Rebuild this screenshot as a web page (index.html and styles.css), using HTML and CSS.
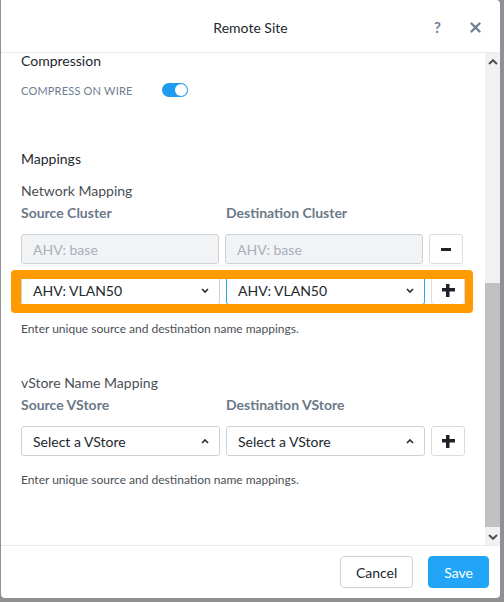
FILE: index.html
```html
<!DOCTYPE html>
<html>
<head>
<meta charset="utf-8">
<link rel="stylesheet" href="styles.css">
</head>
<body>
<div class="modal">
  <header class="modal-head">
    <div class="title">Remote Site</div>
    <div class="head-actions">
      <span class="help">?</span>
      <svg class="close" width="11" height="11" viewBox="0 0 11 11"><path d="M1.5 1.5 L9.5 9.5 M9.5 1.5 L1.5 9.5" stroke="#6f7f93" stroke-width="2.4" stroke-linecap="round"/></svg>
    </div>
  </header>
  <div class="modal-main">
    <div class="content">
      <div class="section-title">Compression</div>
      <div class="toggle-row">
        <span class="caps-label">COMPRESS ON WIRE</span>
        <span class="toggle"><span class="knob"></span></span>
      </div>

      <div class="section-title mappings">Mappings</div>
      <div class="sub-title first">Network Mapping</div>
      <div class="col-labels">
        <span>Source Cluster</span>
        <span>Destination Cluster</span>
      </div>
      <div class="map-row narrow">
        <div class="field disabled">AHV: base</div>
        <div class="field disabled">AHV: base</div>
        <div class="sq-btn"><span class="minus"></span></div>
      </div>
      <div class="map-row second">
        <div class="field select">AHV: VLAN50
          <svg class="chev" width="8" height="5" viewBox="0 0 8 5"><path d="M1 1 L4 4 L7 1" fill="none" stroke="#2a2f36" stroke-width="1.7"/></svg>
        </div>
        <div class="field select focused">AHV: VLAN50
          <svg class="chev" width="8" height="5" viewBox="0 0 8 5"><path d="M1 1 L4 4 L7 1" fill="none" stroke="#2a2f36" stroke-width="1.7"/></svg>
        </div>
        <div class="sq-btn"><span class="plus"></span></div>
        <div class="highlight"></div>
      </div>
      <div class="hint">Enter unique source and destination name mappings.</div>

      <div class="sub-title vstore">vStore Name Mapping</div>
      <div class="col-labels">
        <span>Source VStore</span>
        <span>Destination VStore</span>
      </div>
      <div class="map-row">
        <div class="field select">Select a VStore
          <svg class="chev" width="8" height="5" viewBox="0 0 8 5"><path d="M1 4 L4 1 L7 4" fill="none" stroke="#2a2f36" stroke-width="1.7"/></svg>
        </div>
        <div class="field select">Select a VStore
          <svg class="chev" width="8" height="5" viewBox="0 0 8 5"><path d="M1 4 L4 1 L7 4" fill="none" stroke="#2a2f36" stroke-width="1.7"/></svg>
        </div>
        <div class="sq-btn"><span class="plus"></span></div>
      </div>
      <div class="hint">Enter unique source and destination name mappings.</div>
    </div>
    <div class="scrollbar">
      <div class="sb-btn"><svg width="10" height="6" viewBox="0 0 10 6"><path d="M1 5 L5 1.2 L9 5" fill="none" stroke="#505050" stroke-width="2"/></svg></div>
      <div class="sb-track"><div class="sb-thumb"></div></div>
      <div class="sb-btn"><svg width="10" height="6" viewBox="0 0 10 6"><path d="M1 1 L5 4.8 L9 1" fill="none" stroke="#505050" stroke-width="2"/></svg></div>
    </div>
  </div>
  <footer class="modal-foot">
    <button class="btn">Cancel</button>
    <button class="btn primary">Save</button>
  </footer>
</div>
</body>
</html>
```
FILE: styles.css
```css
html, body {
  margin: 0;
  padding: 0;
}
body {
  background: #8e9094;
  font-family: Lato, "Open Sans", sans-serif;
  color: #22272e;
}
.modal {
  margin-left: 1px;
  width: 499px;
  height: 598px;
  background: #fff;
  border-radius: 0 4px 4px 4px;
  display: flex;
  flex-direction: column;
  overflow: hidden;
}
.modal-head {
  height: 52px;
  border-bottom: 1px solid #e7eaee;
  display: grid;
  grid-template-columns: 1fr auto 1fr;
  align-items: center;
  flex-shrink: 0;
}
.title {
  grid-column: 2;
  font-size: 14px;
  color: #22272e;
  padding-top: 2px;
}
.head-actions {
  grid-column: 3;
  justify-self: end;
  display: flex;
  align-items: center;
  gap: 29px;
  padding-right: 19px;
  padding-top: 2px;
}
.help {
  font-size: 15px;
  font-weight: 700;
  color: #6f7f93;
}
.modal-main {
  flex: 1;
  display: flex;
  min-height: 0;
}
.content {
  flex: 1;
  padding-left: 20px;
}
.section-title {
  font-size: 14px;
  line-height: 16px;
  color: #22272e;
}
.toggle-row {
  margin-top: 14px;
  height: 14px;
  display: flex;
  align-items: center;
}
.caps-label {
  font-size: 11px;
  color: #6e7d90;
  width: 141px;
  letter-spacing: 0.2px;
}
.toggle {
  width: 26px;
  height: 14px;
  border-radius: 7px;
  background: #1f9bf0;
  display: flex;
  justify-content: flex-end;
  align-items: center;
  padding-right: 1px;
  box-sizing: border-box;
}
.knob {
  width: 12px;
  height: 12px;
  border-radius: 50%;
  background: #fff;
}
.mappings {
  margin-top: 54px;
}
.sub-title {
  font-size: 14px;
  line-height: 16px;
  color: #4a4f56;
}
.sub-title.first {
  margin-top: 16px;
}
.sub-title.vstore {
  margin-top: 39px;
}
.col-labels {
  margin-top: 6px;
  display: grid;
  grid-template-columns: 205px auto;
  font-size: 14px;
  line-height: 16px;
  font-weight: 700;
  color: #6b7888;
}
.map-row {
  margin-top: 13px;
  display: grid;
  grid-template-columns: 199px 199px 34px;
  gap: 6px;
  height: 30px;
  position: relative;
}
.map-row.narrow {
  grid-template-columns: 198px 198px 34px;
}
.map-row.second {
  margin-top: 11px;
}
.field {
  box-sizing: border-box;
  height: 30px;
  border: 1px solid #ccd2d8;
  border-radius: 3px;
  font-size: 14px;
  display: flex;
  align-items: center;
  padding-left: 11px;
  padding-right: 10px;
  background: #fff;
  color: #22272e;
}
.field.disabled {
  background: #f2f3f5;
  color: #a7b0bb;
}
.field.select {
  justify-content: space-between;
}
.field.focused {
  border-color: #2aa5f5;
}
.chev {
  flex-shrink: 0;
}
.sq-btn {
  box-sizing: border-box;
  height: 30px;
  border: 1px solid #d8dde2;
  border-radius: 3px;
  background: #fff;
  display: flex;
  align-items: center;
  justify-content: center;
}
.minus {
  width: 10px;
  height: 3px;
  background: #1f2329;
}
.plus {
  width: 13px;
  height: 13px;
  background:
    linear-gradient(#1f2329, #1f2329) center / 13px 3.5px no-repeat,
    linear-gradient(#1f2329, #1f2329) center / 3.5px 13px no-repeat;
}
.highlight {
  position: absolute;
  left: -10px;
  top: -5px;
  width: 462px;
  height: 43px;
  box-sizing: border-box;
  border-style: solid;
  border-color: #ff9a00;
  border-width: 9px 8px 9px 10px;
  border-radius: 4px;
  pointer-events: none;
}
.hint {
  margin-top: 17px;
  font-size: 12px;
  line-height: 14px;
  color: #4a4f56;
}
.scrollbar {
  width: 15px;
  background: #f1f1f1;
  display: flex;
  flex-direction: column;
}
.sb-btn {
  height: 17px;
  display: flex;
  align-items: center;
  justify-content: center;
}
.sb-track {
  flex: 1;
  display: flex;
  flex-direction: column;
  justify-content: flex-end;
}
.sb-thumb {
  height: 244px;
  background: #c1c1c1;
  margin-bottom: 1px;
}
.modal-foot {
  height: 52px;
  border-top: 1px solid #e7eaee;
  display: flex;
  justify-content: flex-end;
  align-items: center;
  gap: 15px;
  padding-right: 11px;
  flex-shrink: 0;
}
.btn {
  height: 32px;
  border-radius: 4px;
  border: 1px solid #ccd3da;
  background: #fff;
  font-family: Lato, "Open Sans", sans-serif;
  font-size: 14px;
  color: #22272e;
  padding: 0 15px;
  margin: 0;
}
.btn.primary {
  background: #22a5f7;
  border-color: #22a5f7;
  color: #fff;
}
```
